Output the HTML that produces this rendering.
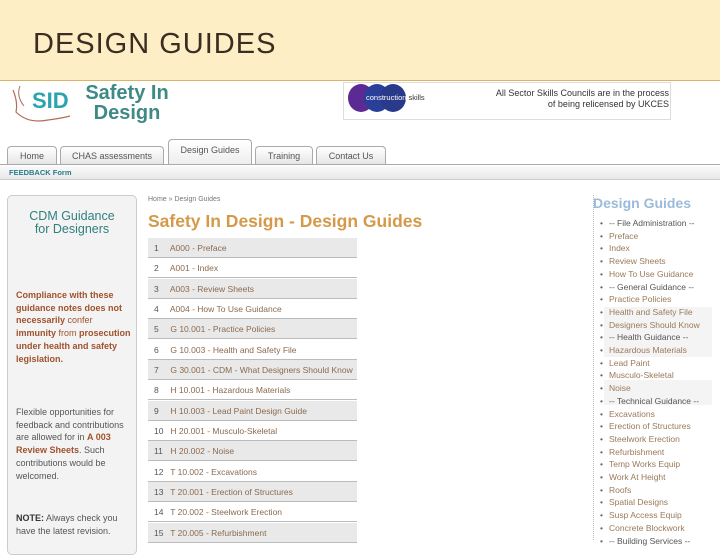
<!DOCTYPE html>
<html><head><meta charset="utf-8"><style>
*{margin:0;padding:0;box-sizing:border-box}
body{width:720px;height:540px;overflow:hidden;background:#fff;font-family:"Liberation Sans",sans-serif;position:relative}
.hdr{position:absolute;left:0;top:0;width:720px;height:81px;background:#fdeec6;border-bottom:1px solid #d9b56a}
.hdr h1{position:absolute;left:33px;top:28px;font-weight:normal;font-size:29px;color:#3a2e22;letter-spacing:1px}
.abs{position:absolute}
.tab{position:absolute;top:146px;height:18px;border:1px solid #aaa;border-bottom:none;border-radius:4px 4px 0 0;background:linear-gradient(#fff,#e6e6e6);font-size:9px;color:#555;text-align:center;line-height:18px}
.row{position:absolute;left:148px;width:209px;height:20px;border-bottom:1px solid #bbb;font-size:8.5px;color:#8a6a50;line-height:20px;padding-left:6px;white-space:nowrap;overflow:visible}
.row.g{background:#e9e9e9}
.row span{color:#555;display:inline-block;width:14px}
.rl{position:absolute;left:600px;font-size:8.5px;color:#9a7a5a;line-height:12.7px;white-space:nowrap}
.rl i{font-style:normal;color:#666;margin-right:6px}
</style></head><body>
<div class="hdr"><h1>DESIGN GUIDES</h1></div>
<svg class="abs" style="left:8px;top:82px" width="70" height="44"><path d="M5 8 Q10 20 8 30 Q20 42 40 38 Q55 36 62 34" fill="none" stroke="#b56b5b" stroke-width="1.2"/><path d="M12 4 Q8 14 16 24" fill="none" stroke="#b56b5b"/><text x="24" y="26" font-family="Liberation Sans" font-weight="bold" font-size="22" fill="#2aa4b0">SID</text></svg>
<div class="abs" style="left:84px;top:83px;font-weight:bold;font-size:20px;color:#3e8a85;line-height:20px;text-align:center;width:86px">Safety In<br>Design</div>
<div class="abs" style="left:343px;top:82px;width:328px;height:38px;border:1px solid #ddd;background:#fff"></div>
<div class="abs" style="left:348px;top:84px;width:26px;height:28px;border-radius:50%;background:#5b2a92"></div>
<div class="abs" style="left:364px;top:84px;width:26px;height:28px;border-radius:50%;background:#2a3f9a"></div>
<div class="abs" style="left:380px;top:84px;width:26px;height:28px;border-radius:50%;background:#2a3a8a"></div>
<div class="abs" style="left:366px;top:93px;font-size:7.5px;color:#fff;white-space:nowrap">construction<span style="color:#333;margin-left:2px">skills</span></div>
<div class="abs" style="left:458px;top:88px;font-size:9px;color:#333;text-align:right;width:211px;line-height:11px">All Sector Skills Councils are in the process<br>of being relicensed by UKCES</div>
<div class="tab" style="left:7px;width:50px">Home</div>
<div class="tab" style="left:60px;width:104px">CHAS assessments</div>
<div class="tab" style="left:168px;top:139px;height:25px;width:84px;line-height:20px;background:linear-gradient(#fff,#eee)">Design Guides</div>
<div class="tab" style="left:255px;width:58px">Training</div>
<div class="tab" style="left:316px;width:70px">Contact Us</div>
<div class="abs" style="left:0;top:164px;width:720px;height:1px;background:#aaa"></div>
<div class="abs" style="left:0;top:166px;width:720px;height:14px;background:linear-gradient(#fafafa,#e8e8e8);border-bottom:1px solid #ccc;font-size:7.5px;font-weight:bold;color:#2a7a8a;padding-left:9px;line-height:14px">FEEDBACK Form</div>
<div class="abs" style="left:7px;top:195px;width:130px;height:360px;background:#f3f3f3;border:1px solid #ccc;border-radius:5px"></div>
<div class="abs" style="left:7px;top:210px;width:130px;text-align:center;font-size:12.5px;color:#2f7f7f;line-height:13px">CDM Guidance<br>for Designers</div>
<div class="abs" style="left:16px;top:289px;width:118px;font-size:9px;font-weight:bold;color:#a0522d;line-height:12.7px">Compliance with these guidance notes does not necessarily <span style="font-weight:normal">confer</span> immunity <span style="font-weight:normal">from</span> prosecution under health and safety legislation.</div>
<div class="abs" style="left:16px;top:406px;width:118px;font-size:9px;color:#555;line-height:12.7px">Flexible opportunities for feedback and contributions are allowed for in <b style="color:#a0522d">A 003 Review Sheets</b>. Such contributions would be welcomed.</div>
<div class="abs" style="left:16px;top:512px;width:118px;font-size:9px;color:#555;line-height:12.7px"><b style="color:#333">NOTE:</b> Always check you have the latest revision.</div>
<div class="abs" style="left:148px;top:196px;font-size:7px;color:#777">Home » Design Guides</div>
<div class="abs" style="left:148px;top:211px;font-size:17.5px;font-weight:bold;color:#d49a4a;white-space:nowrap">Safety In Design - Design Guides</div>
<div class="row g" style="top:238px"><span>1</span> A000 - Preface</div>
<div class="row" style="top:258px"><span>2</span> A001 - Index</div>
<div class="row g" style="top:279px"><span>3</span> A003 - Review Sheets</div>
<div class="row" style="top:299px"><span>4</span> A004 - How To Use Guidance</div>
<div class="row g" style="top:319px"><span>5</span> G 10.001 - Practice Policies</div>
<div class="row" style="top:340px"><span>6</span> G 10.003 - Health and Safety File</div>
<div class="row g" style="top:360px"><span>7</span> G 30.001 - CDM - What Designers Should Know</div>
<div class="row" style="top:380px"><span>8</span> H 10.001 - Hazardous Materials</div>
<div class="row g" style="top:401px"><span>9</span> H 10.003 - Lead Paint Design Guide</div>
<div class="row" style="top:421px"><span>10</span> H 20.001 - Musculo-Skeletal</div>
<div class="row g" style="top:441px"><span>11</span> H 20.002 - Noise</div>
<div class="row" style="top:462px"><span>12</span> T 10.002 - Excavations</div>
<div class="row g" style="top:482px"><span>13</span> T 20.001 - Erection of Structures</div>
<div class="row" style="top:502px"><span>14</span> T 20.002 - Steelwork Erection</div>
<div class="row g" style="top:523px"><span>15</span> T 20.005 - Refurbishment</div>
<div class="abs" style="left:593px;top:195px;width:0;height:345px;border-left:1px dotted #bbb"></div>
<div class="abs" style="left:604px;top:307px;width:108px;height:50px;background:#f4f4f4"></div>
<div class="abs" style="left:604px;top:380px;width:108px;height:25px;background:#f4f4f4"></div>
<div class="abs" style="left:593px;top:195px;font-size:14px;font-weight:bold;color:#9bbbd8">Design Guides</div>
<div class="rl" style="top:217px;color:#555"><i>•</i>-- File Administration --<br><i>•</i><span style="color:#9a7a5a">Preface</span><br><i>•</i><span style="color:#9a7a5a">Index</span><br><i>•</i><span style="color:#9a7a5a">Review Sheets</span><br><i>•</i><span style="color:#9a7a5a">How To Use Guidance</span><br><i>•</i>-- General Guidance --<br><i>•</i><span style="color:#9a7a5a">Practice Policies</span><br><i>•</i><span style="color:#9a7a5a">Health and Safety File</span><br><i>•</i><span style="color:#9a7a5a">Designers Should Know</span><br><i>•</i>-- Health Guidance --<br><i>•</i><span style="color:#9a7a5a">Hazardous Materials</span><br><i>•</i><span style="color:#9a7a5a">Lead Paint</span><br><i>•</i><span style="color:#9a7a5a">Musculo-Skeletal</span><br><i>•</i><span style="color:#9a7a5a">Noise</span><br><i>•</i>-- Technical Guidance --<br><i>•</i><span style="color:#9a7a5a">Excavations</span><br><i>•</i><span style="color:#9a7a5a">Erection of Structures</span><br><i>•</i><span style="color:#9a7a5a">Steelwork Erection</span><br><i>•</i><span style="color:#9a7a5a">Refurbishment</span><br><i>•</i><span style="color:#9a7a5a">Temp Works Equip</span><br><i>•</i><span style="color:#9a7a5a">Work At Height</span><br><i>•</i><span style="color:#9a7a5a">Roofs</span><br><i>•</i><span style="color:#9a7a5a">Spatial Designs</span><br><i>•</i><span style="color:#9a7a5a">Susp Access Equip</span><br><i>•</i><span style="color:#9a7a5a">Concrete Blockwork</span><br><i>•</i>-- Building Services --</div>
</body></html>
